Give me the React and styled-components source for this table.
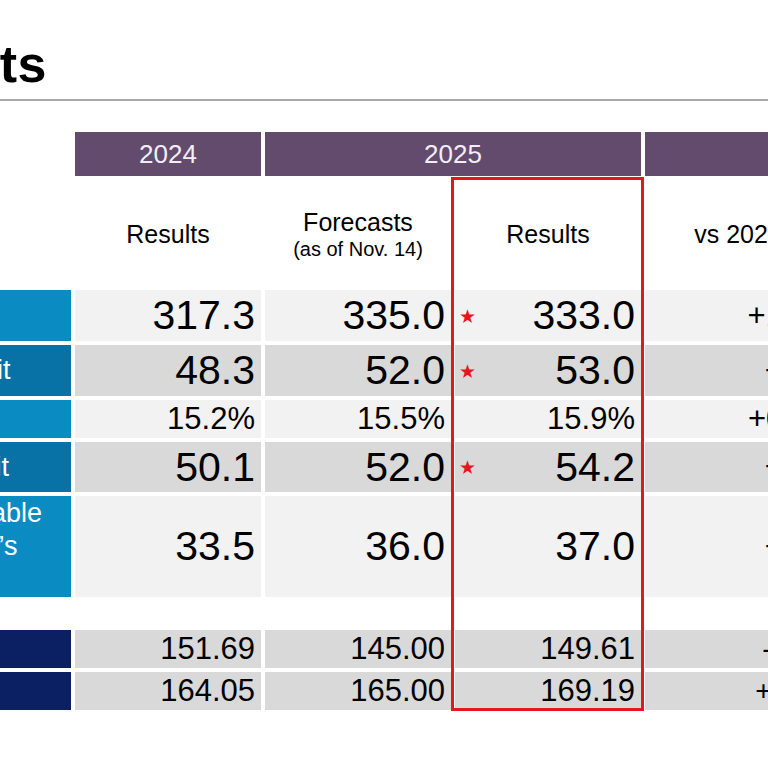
import React from 'react'
import styled, { createGlobalStyle } from 'styled-components'

// the slide is shown cropped: its left part lies outside the window
const HIDDEN = 360

const GlobalStyle = createGlobalStyle`
    html, body {
        margin: 0;
        padding: 0;
        background: #fff;
    }
    body {
        font-family: "Liberation Sans", Arial, sans-serif;
        color: #000;
    }
`

const Viewport = styled.div`
    width: 768px;
    height: 768px;
    overflow: hidden;
    background: #fff;
`

const Slide = styled.div`
    width: ${HIDDEN + 768}px;
    margin-left: -${HIDDEN}px;
`

const TitleBar = styled.header`
    padding: 39px 0 10px;
    border-bottom: 2px solid #a8a8a8;
`

const Title = styled.h1`
    width: ${HIDDEN + 47}px;
    margin: 0;
    font-size: 52px;
    line-height: 50px;
    font-weight: 700;
    letter-spacing: 0.5px;
    text-align: right;
    white-space: nowrap;
`

const Table = styled.div`
    position: relative;
    display: grid;
    grid-template-columns: 240px repeat(5, 186px);
    grid-template-rows: 44px 106px 51px 51px 38px 50px 101px 25px 38px 38px;
    column-gap: 4px;
    row-gap: 4px;
    margin: 31px 0 0 ${HIDDEN - 169}px;
`

const YearCell = styled.div`
    grid-column: span ${(p) => p.$span || 1};
    display: flex;
    align-items: center;
    justify-content: center;
    background: #634b6e;
    color: #f3eef5;
    font-size: 26px;
`

const Blank = styled.div`
    background: #fff;
`

const HeadCell = styled.div`
    display: flex;
    flex-direction: column;
    align-items: center;
    justify-content: center;
    padding-top: 3px;
    font-size: 25px;
    line-height: 29px;
    text-align: center;
`

const Note = styled.span`
    font-size: 20px;
    line-height: 24px;
`

const LABEL_BG = {
    bright: '#0a8bc2',
    deep: '#0872a7',
    navy: '#0b2062',
}

const Label = styled.div`
    display: flex;
    flex-direction: column;
    justify-content: center;
    padding-left: 7px;
    background: ${(p) => LABEL_BG[p.$tone]};
    color: #fff;
    font-size: 27px;
    line-height: 33px;
    white-space: nowrap;
`

const SIZES = { lg: 41, md: 31, sm: 28 }

const DataCell = styled.div`
    display: flex;
    align-items: center;
    padding: 0 ${(p) => (p.$diff ? 5 : 6)}px 0 4px;
    background: ${(p) => (p.$dark ? '#d9d9d9' : '#f2f2f2')};
    font-size: ${(p) => SIZES[p.$size]}px;
    white-space: nowrap;
`

const Star = styled.span`
    color: #e8141b;
    font-family: "DejaVu Sans", sans-serif;
    font-size: 19px;
`

const Value = styled.span`
    margin-left: auto;
`

const Unit = styled.span`
    font-size: 0.65em;
`

const Spacer = styled.div`
    grid-column: 1 / -1;
`

// red frame laid over the 2025 results column
const Highlight = styled.div`
    position: absolute;
    grid-column: 4 / 5;
    grid-row: 2 / 11;
    top: -3px;
    right: -3px;
    bottom: -1px;
    left: -4px;
    border: 3px solid #e3171d;
    pointer-events: none;
`

const rows = [
    {
        label: ['Net sales'], tone: 'bright', dark: false, size: 'lg',
        values: ['317.3', '335.0', '333.0', '+15.7', '-2.0'], star: true,
    },
    {
        label: ['Adjusted profit'], tone: 'deep', dark: true, size: 'lg',
        values: ['48.3', '52.0', '53.0', '+4.7', '+1.0'], star: true,
    },
    {
        label: ['Margin'], tone: 'bright', dark: false, size: 'md',
        values: ['15.2%', '15.5%', '15.9%', '+0.7', '+0.4'], unit: 'pt',
    },
    {
        label: ['Ordinary profit'], tone: 'deep', dark: true, size: 'lg',
        values: ['50.1', '52.0', '54.2', '+4.1', '+2.2'], star: true,
    },
    {
        label: ['Profit attributable', 'for the parent\u2019s', 'owners'], tone: 'bright', dark: false, size: 'lg',
        values: ['33.5', '36.0', '37.0', '+3.5', '+1.0'],
    },
]

const rates = [
    { label: ['USD/JPY'], values: ['151.69', '145.00', '149.61', '-2.08', '+4.61'] },
    { label: ['EUR/JPY'], values: ['164.05', '165.00', '169.19', '+5.14', '+4.19'] },
]

const Row = ({ row, tone, dark, size, diffSize }) => (
    <>
        <Label $tone={tone}>
            {row.label.map((line) => <span key={line}>{line}</span>)}
        </Label>
        {row.values.map((v, i) => (
            <DataCell key={i} $dark={dark} $diff={i >= 3} $size={i >= 3 ? diffSize : size}>
                {i === 2 && row.star && <Star>★</Star>}
                <Value>
                    {v}
                    {i >= 3 && row.unit && <Unit>{row.unit}</Unit>}
                </Value>
            </DataCell>
        ))}
    </>
)

const App = () => (
    <Viewport>
        <GlobalStyle />
        <Slide>
            <TitleBar>
                <Title>FY2025 Results</Title>
            </TitleBar>

            <Table>
                <Blank />
                <YearCell>2024</YearCell>
                <YearCell $span={2}>2025</YearCell>
                <YearCell $span={2}>Change</YearCell>

                <Blank />
                <HeadCell>Results</HeadCell>
                <HeadCell>
                    Forecasts
                    <Note>(as of Nov. 14)</Note>
                </HeadCell>
                <HeadCell>Results</HeadCell>
                <HeadCell>vs 2024</HeadCell>
                <HeadCell>vs Forecasts</HeadCell>

                {rows.map((r) => (
                    <Row key={r.label[0]} row={r} tone={r.tone} dark={r.dark} size={r.size} diffSize="md" />
                ))}

                <Spacer />

                {rates.map((r) => (
                    <Row key={r.label[0]} row={r} tone="navy" dark size="md" diffSize="sm" />
                ))}

                <Highlight />
            </Table>
        </Slide>
    </Viewport>
)

export default App
